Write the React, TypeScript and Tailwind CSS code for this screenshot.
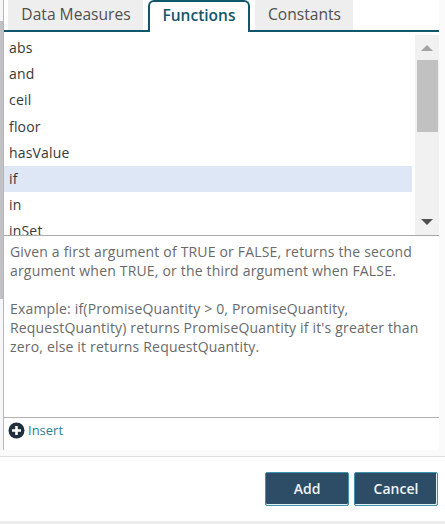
import { useState } from "react";
import clsx from "clsx";

const TABS = [
    { label: "Data Measures", className: "ml-1 w-[135px]" },
    { label: "Functions", className: "ml-[5px] w-[102px]" },
    { label: "Constants", className: "ml-[5px] w-[98px]" },
];

const FUNCTIONS = ["abs", "and", "ceil", "floor", "hasValue", "if", "in", "inSet"];

function Tabs({ active, onSelect }: { active: string; onSelect: (label: string) => void }) {
    return (
        <div className="flex h-8 shrink-0 border-b-2 border-[#11576b]">
            {TABS.map(({ label, className }) => (
                <button
                    key={label}
                    onClick={() => onSelect(label)}
                    className={clsx(
                        "shrink-0 whitespace-nowrap text-center",
                        className,
                        active === label
                            ? "h-8 rounded-t-[6px] border-x-2 border-t-2 border-[#11576b] bg-white pb-1 text-[15.5px] leading-[26px] font-[600] text-[#11576b]"
                            : "h-[30px] bg-[#eeeeee] pb-[2px] pl-px text-[15.6px] leading-[28px] text-[#505050]",
                    )}
                >
                    {label}
                </button>
            ))}
        </div>
    );
}

function Scrollbar() {
    return (
        <div className="mt-[3px] flex w-6 shrink-0 flex-col items-center bg-[#f1f1f1]">
            <svg width="12" height="6" viewBox="0 0 12 6" className="mt-[10px] shrink-0"><path d="M0 6 6 0l6 6z" fill="#a3a3a3" /></svg>
            <div className="mt-[9px] h-[72px] w-[21px] shrink-0 bg-[#c1c1c1]" />
            <svg width="12" height="6" viewBox="0 0 12 6" className="mt-auto mb-[10px] shrink-0"><path d="M0 0h12L6 6z" fill="#505050" /></svg>
        </div>
    );
}

export default function App() {
    const [tab, setTab] = useState("Functions");
    const [selected, setSelected] = useState("if");

    return (
        <div className="flex h-[524px] w-[445px] flex-col overflow-hidden bg-white font-['Open_Sans',sans-serif]">
            <div className="flex h-[450px] shrink-0 bg-[#fafafa]">
                {/* Outer page scrollbar */}
                <div className="w-1 shrink-0 border-r border-[#b5b5ba] bg-[#f6f6f8] pt-[21px]">
                    <div className="h-[278px] bg-[#c1c1c6]" />
                </div>

                <div className="flex w-[435px] shrink-0 flex-col bg-white">
                    <Tabs active={tab} onSelect={setTab} />

                    {/* Function list */}
                    <div className="flex h-[204px] shrink-0 border-b border-[#aaaaaa]">
                        <ul className="mr-[3px] flex-1 overflow-hidden pt-[3px]">
                            {FUNCTIONS.map(name => (
                                <li
                                    key={name}
                                    onClick={() => setSelected(name)}
                                    className={clsx("h-[26.2px] pl-[5px] text-sm leading-[26px] tracking-[0.18px] text-[#383838]", selected === name && "bg-[#dee7f6]")}
                                >
                                    {name}
                                </li>
                            ))}
                        </ul>
                        <Scrollbar />
                    </div>

                    {/* Description */}
                    <div className="h-[182px] shrink-0 border-b border-[#b0b0b0] pt-[6px] pl-[6px] text-sm leading-[19.1px] tracking-[0.18px] whitespace-nowrap text-[#6a6a6a]">
                        <p>Given a first argument of TRUE or FALSE, returns the second<br />argument when TRUE, or the third argument when FALSE.</p>
                        <p className="mt-[19px]">Example: if(PromiseQuantity &gt; 0, PromiseQuantity,<br />RequestQuantity) returns PromiseQuantity if it's greater than<br />zero, else it returns RequestQuantity.</p>
                    </div>

                    <button className="flex h-[25px] items-center gap-[3px] pl-[4px] text-[13px] text-[#2b7f92]">
                        <svg width="17" height="17" viewBox="0 0 17 17">
                            <circle cx="8.5" cy="8.5" r="8" fill="#20303f" />
                            <path d="M8.5 4v9M4 8.5h9" stroke="#fff" strokeWidth="2.6" />
                        </svg>
                        Insert
                    </button>
                </div>
            </div>

            {/* Footer */}
            <div className="h-[7px] shrink-0 border-b border-[#dedede] bg-[#fafafa]" />
            <div className="flex h-16 shrink-0 items-start justify-end gap-[5px] pt-[15px] pr-[7px] text-sm font-[550] text-[#eef3f7]">
                <button className="h-[34px] w-[84px] rounded-[2px] border border-[#3e94ab] bg-[#2d4c65] shadow-[inset_0_-1px_0_#e4f2f5]">Add</button>
                <button className="h-[34px] w-[84px] rounded-[2px] border border-[#3e94ab] bg-[#2d4c65] shadow-[inset_-1px_-1px_0_#e4f2f5]">Cancel</button>
            </div>
            <div className="h-[3px] shrink-0 bg-[#ececec]" />
        </div>
    );
}
